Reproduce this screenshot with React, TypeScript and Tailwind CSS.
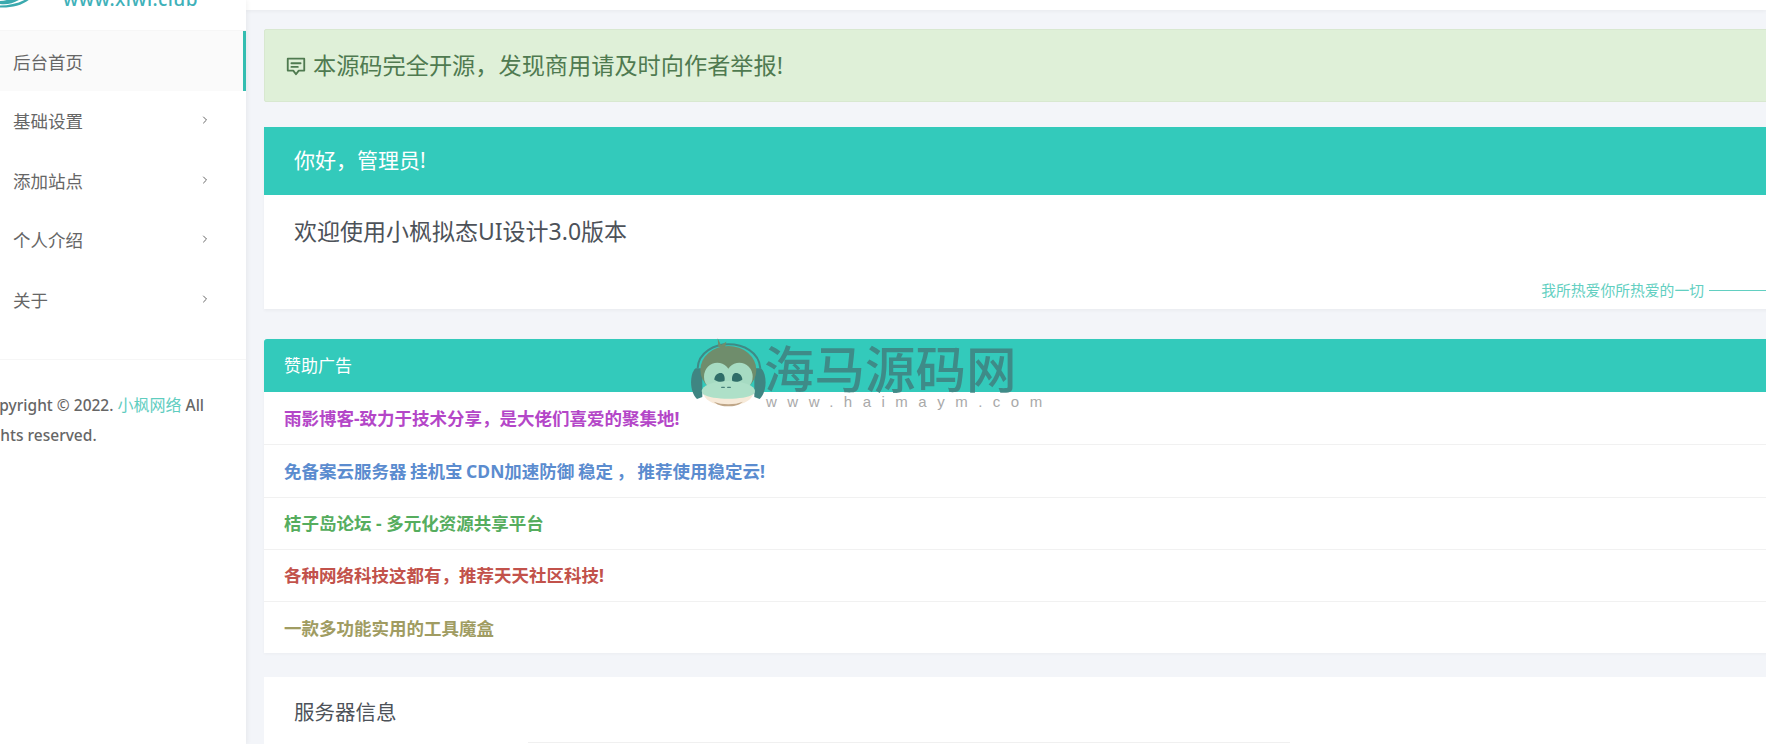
import React from 'react';
import { ChevronRight } from 'lucide-react';

const menu = ['后台首页', '基础设置', '添加站点', '个人介绍', '关于'];

const sponsors = [
  { text: '雨影博客-致力于技术分享，是大佬们喜爱的聚集地!', color: 'text-[#b446c8]' },
  { text: '免备案云服务器 挂机宝 CDN加速防御 稳定 ， 推荐使用稳定云!', color: 'text-[#5b8ccf] [word-spacing:-1px]' },
  { text: '桔子岛论坛 - 多元化资源共享平台', color: 'text-[#56ad5e]' },
  { text: '各种网络科技这都有，推荐天天社区科技!', color: 'text-[#c2524b]' },
  { text: '一款多功能实用的工具魔盒', color: 'text-[#a09c62]' },
];

const Sidebar = () => (
  <aside className="w-[246px] flex-shrink-0 bg-white shadow-[1px_0_5px_rgba(0,0,0,0.06)] z-10 overflow-hidden">
    {/* Logo, scrolled mostly out of view */}
    <div className="h-[31px] border-b border-[#f6f6f6] flex items-start overflow-hidden">
      <svg width="50" height="10" viewBox="0 0 50 10" className="flex-shrink-0">
        <path d="M0 4 C8 5 15 3 22 -2 L11 -2 C8 0 4 1 0 1 Z" fill="#3aa9ae" />
        <path d="M0 7.5 C12 8 24 5 31 -2 L28 -2 C20 3 10 5.5 0 5.5 Z" fill="#3aa9ae" />
      </svg>
      <span className="ml-[13px] -mt-[16px] text-[19px] leading-[30px] font-medium tracking-[0.4px] text-[#3fb1b9] font-['Noto_Sans',sans-serif]">
        www.xiwi.club
      </span>
    </div>

    <nav>
      {menu.map((item, i) => (
        <div
          key={item}
          className={`h-[59.5px] flex items-center justify-between pl-[13px] pr-[35px] pt-[2px] text-[17.5px] text-[#666] ${
            i === 0 ? 'bg-[#fafafa] border-r-[3px] border-[#33bdb0]' : ''
          }`}
        >
          <span>{item}</span>
          {i > 0 && <ChevronRight size={12} strokeWidth={2} className="text-[#666] -mt-[2px]" />}
        </div>
      ))}
    </nav>

    <div className="mt-[30px] border-t border-[#f6f6f6] pt-[30px]">
      <p className="-ml-[20px] w-[236px] text-[15.5px] leading-[30px] font-medium text-[#666]">
        Copyright © 2022. <span className="text-[16px] text-[#5fcdbf] font-normal">小枫网络</span> All rights reserved.
      </p>
    </div>
  </aside>
);

const Watermark = () => (
  <div className="absolute left-[685px] top-[335px] z-20 flex pointer-events-none">
    <svg width="110" height="80" viewBox="0 0 330 240" className="flex-shrink-0">
      <path d="M38 100 C40 50 90 28 130 28 C175 28 222 50 226 100" fill="none" stroke="#3f8a86" strokeWidth="6" />
      <path d="M32 100 C14 115 12 170 36 192 L52 186 L52 100 Z" fill="#3f8582" />
      <path d="M228 100 C246 115 248 170 224 192 L208 186 L208 100 Z" fill="#3f8582" />
      <path d="M100 36 L98 10 L108 30 L124 20 L120 38 Z" fill="#6f8d6c" />
      <ellipse cx="130" cy="105" rx="84" ry="72" fill="#6f8d6c" />
      <ellipse cx="97" cy="125" rx="40" ry="42" fill="#a6dbc2" />
      <ellipse cx="163" cy="125" rx="40" ry="42" fill="#a6dbc2" />
      <ellipse cx="130" cy="168" rx="80" ry="30" fill="#aee0c8" />
      <path d="M55 178 C80 196 180 196 205 178 C195 202 165 212 130 212 C95 212 65 202 55 178 Z" fill="#f7ead9" />
      <path d="M86 200 C110 210 150 210 174 200 C160 212 145 214 130 214 C115 214 100 212 86 200 Z" fill="#bfa688" />
      <path d="M88 134 C88 120 100 112 110 114 C120 118 120 134 118 138 C108 142 96 140 88 134 Z" fill="#2f6d68" />
      <path d="M172 134 C172 120 160 112 150 114 C140 118 140 134 142 138 C152 142 164 140 172 134 Z" fill="#2f6d68" />
      <rect x="108" y="155" width="12" height="4" rx="2" fill="#47807a" />
      <rect x="126" y="155" width="12" height="4" rx="2" fill="#47807a" />
    </svg>
    <div className="-ml-[31px] font-['Noto_Sans_CJK_SC',sans-serif]">
      <div className="h-[57px] pt-[4px] text-[50.5px] leading-[54px] font-medium text-[#3f8483]/90 whitespace-nowrap">
        海马源码网
      </div>
      <div className="ml-[2px] text-[15px] leading-[20px] tracking-[10.5px] text-[#a9a9a9] whitespace-nowrap font-['Liberation_Sans',sans-serif]">
        www.haimaym.com
      </div>
    </div>
  </div>
);

export default function App() {
  return (
    <div className="relative h-[744px] flex overflow-hidden bg-[#f3f5f9] text-[#555] font-['Noto_Sans','Noto_Sans_CJK_SC',sans-serif]">
      <Sidebar />

      <main className="flex-1 min-w-0 overflow-hidden">
        <div className="h-[10px] bg-white shadow-[0_1px_4px_rgba(0,0,0,0.05)]" />

        <div className="w-[1560px] ml-[18px] pt-[19px] flex flex-col">
          {/* Alert */}
          <div className="h-[73px] flex items-center pl-[20px] bg-[#dff0d8] border border-[#d8e8d0] text-[#4f7a50] text-[23.2px] rounded-[2px]">
            <svg width="22" height="22" viewBox="0 0 24 24" fill="none" stroke="currentColor" strokeWidth="2" strokeLinejoin="round" strokeLinecap="round" className="mr-[6px]">
              <path d="M3 4h18v13h-6l-3 4-3-4H3z" />
              <path d="M7 9h10M7 13h7" />
            </svg>
            <span>本源码完全开源，发现商用请及时向作者举报!</span>
          </div>

          {/* Welcome */}
          <section className="mt-[25px] bg-white shadow-[0_2px_3px_rgba(0,0,0,0.035)]">
            <div className="h-[68px] flex items-center px-[30px] bg-[#33cabb] text-white text-[21px]">你好，管理员!</div>
            <div className="h-[114px] flex flex-col">
              <div className="pl-[30px] pt-[17px] text-[23px] leading-[38px] text-[#4d5259]">欢迎使用小枫拟态UI设计3.0版本</div>
              <div className="mt-[29px] pr-[24px] flex items-center justify-end text-[14.8px] text-[#62cfc1]">
                <span>我所热爱你所热爱的一切</span>
                <span className="ml-[5px] w-[91px] h-px bg-[#62cfc1]" />
              </div>
            </div>
          </section>

          {/* Sponsors */}
          <section className="mt-[30px] bg-white shadow-[0_1px_3px_rgba(0,0,0,0.035)]">
            <div className="h-[53px] flex items-center pl-[20px] bg-[#33cabb] text-white text-[17px] rounded-t-[3px]">赞助广告</div>
            {sponsors.map((row, i) => (
              <div
                key={row.text}
                className={`h-[52.3px] flex items-center pl-[20px] text-[17.5px] font-bold ${row.color} ${
                  i > 0 ? 'border-t border-[#f1f1f1]' : ''
                }`}
              >
                {row.text}
              </div>
            ))}
          </section>

          {/* Server info */}
          <section className="mt-[24px] h-[120px] bg-white">
            <div className="pl-[30px] pt-[20px] text-[20.5px] leading-[30px] text-[#4d5259]">服务器信息</div>
            <div className="ml-[264px] mt-[15px] w-[762px] border-t border-[#f0f0f0]" />
          </section>
        </div>
      </main>

      <Watermark />
    </div>
  );
}
